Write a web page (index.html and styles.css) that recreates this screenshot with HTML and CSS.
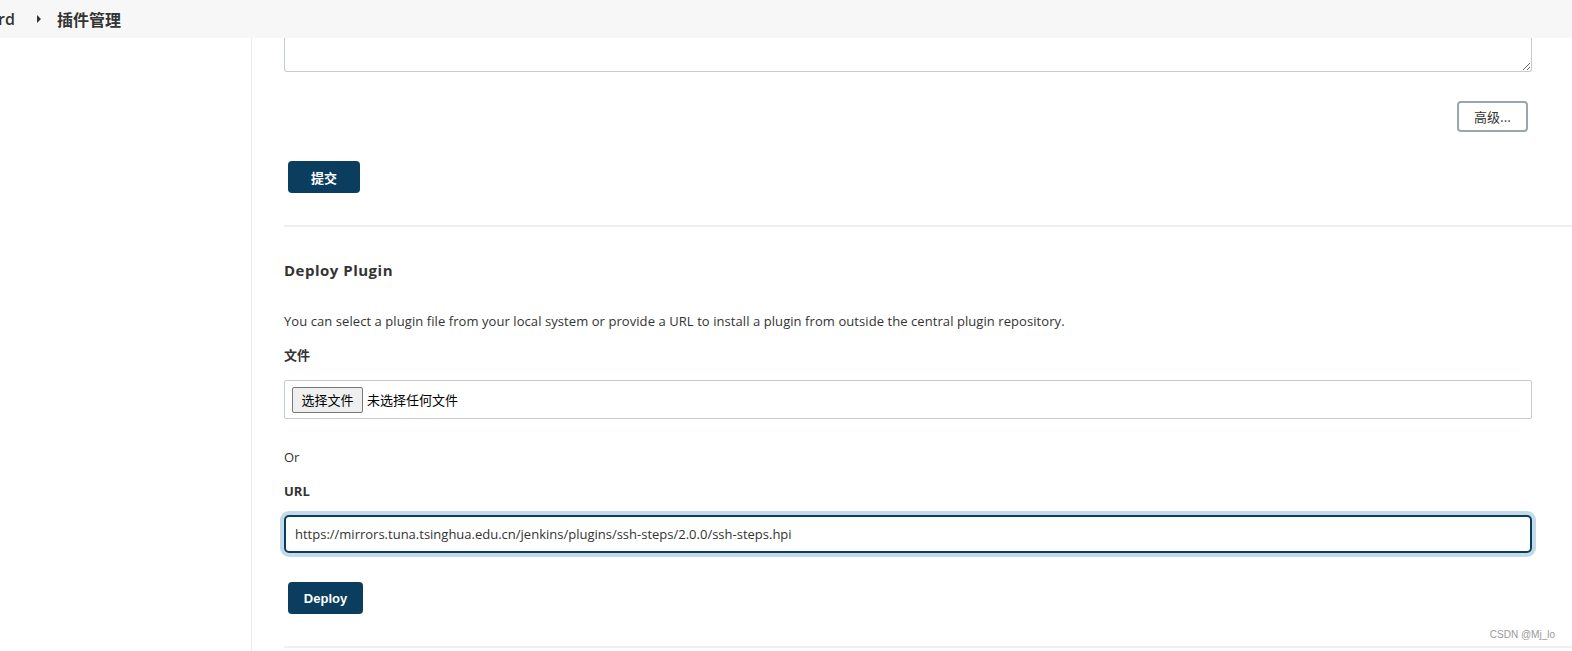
FILE: index.html
```html
<!DOCTYPE html>
<html lang="zh-CN">
<head>
  <meta charset="UTF-8" />
  <title>插件管理 [Jenkins]</title>
  <link rel="stylesheet" href="styles.css">
</head>
<body>

<!-- Breadcrumb bar -->
<header class="top-bar">
  <span class="crumb">rd</span>
  <span class="crumb-arrow"></span>
  <span class="crumb current">插件管理</span>
</header>

<div class="page">
  <aside class="side-panel"></aside>

  <main class="main-panel">
    <!-- tail of the previous form -->
    <div class="form-block">
      <textarea class="desc-box"></textarea>
      <div class="advanced-row">
        <button class="btn-advanced">高级...</button>
      </div>
      <div class="form-actions">
        <button class="btn-primary btn-submit">提交</button>
      </div>
    </div>

    <div class="separator"></div>

    <!-- Deploy Plugin -->
    <section class="form-block">
      <h3 class="section-title">Deploy Plugin</h3>
      <p class="section-desc">You can select a plugin file from your local system or provide a URL to install a plugin from outside the central plugin repository.</p>

      <div class="field-label">文件</div>
      <div class="file-box">
        <button class="file-btn">选择文件</button>
        <span class="file-name">未选择任何文件</span>
      </div>

      <div class="or-text">Or</div>

      <div class="field-label">URL</div>
      <input class="url-input" type="text" value="https://mirrors.tuna.tsinghua.edu.cn/jenkins/plugins/ssh-steps/2.0.0/ssh-steps.hpi" />

      <div class="form-actions">
        <button class="btn-primary btn-deploy">Deploy</button>
      </div>
    </section>

    <div class="separator"></div>
  </main>
</div>

<div class="watermark">CSDN @Mj_lo</div>

</body>
</html>
```

FILE: styles.css
```css
* {
  box-sizing: border-box;
}
body {
  margin: 0;
  font-family: "Open Sans", "Noto Sans CJK SC", sans-serif;
  font-size: 13px;
  color: #333;
  background: #fff;
  height: 651px;
  overflow: hidden;
  position: relative;
}

/* breadcrumb */
.top-bar {
  height: 38px;
  background: #f7f7f7;
  display: flex;
  align-items: center;
  font-size: 16px;
  font-weight: bold;
  color: #333;
}
.crumb {
  line-height: 20px;
}
.crumb:first-child {
  font-weight: 600;
  margin-left: -2px;
}
.crumb.current {
  font-family: "Noto Sans CJK SC", sans-serif;
  font-size: 16px;
}
.crumb-arrow {
  width: 0;
  height: 0;
  border-top: 4px solid transparent;
  border-bottom: 4px solid transparent;
  border-left: 4px solid #333;
  margin: 0 16px 0 22px;
}

.page {
  display: flex;
  height: 613px;
}
.side-panel {
  width: 252px;
  flex-shrink: 0;
  border-right: 1px solid #ececec;
}
.main-panel {
  flex: 1;
  padding-left: 32px;
}
.form-block {
  padding-right: 40px;
}

.desc-box {
  display: block;
  width: 100%;
  height: 34px;
  border: 1px solid #c3ccd1;
  border-top: none;
  border-radius: 0 0 3px 3px;
  resize: vertical;
  font-family: inherit;
}

.advanced-row {
  display: flex;
  justify-content: flex-end;
  margin-top: 29px;
  padding-right: 4px;
}
.btn-advanced {
  width: 71px;
  height: 31px;
  background: #fff;
  border: 2px solid #9aa5ad;
  border-radius: 4px;
  font-family: "Noto Sans CJK SC", sans-serif;
  font-size: 13px;
  color: #333;
  padding: 0;
}

.form-actions {
  padding-left: 4px;
}
.btn-primary {
  height: 32px;
  background: #0b3d5f;
  color: #fff;
  border: none;
  border-radius: 4px;
  font-weight: bold;
  font-size: 13px;
  padding: 0;
  cursor: pointer;
}
.btn-submit {
  width: 72px;
  margin-top: 29px;
  font-family: "Noto Sans CJK SC", sans-serif;
}
.btn-deploy {
  width: 75px;
  margin-top: 29px;
  font-family: "Liberation Sans", sans-serif;
}

.separator {
  height: 2px;
  background: #f0f0f0;
  margin-top: 32px;
}

.section-title {
  margin: 33px 0 0;
  font-size: 15px;
  line-height: 20px;
  font-weight: bold;
  letter-spacing: 0.5px;
}
.section-desc {
  margin: 31px 0 0;
  line-height: 20px;
  font-size: 13px;
  letter-spacing: 0.07px;
}
.field-label {
  margin-top: 14px;
  line-height: 20px;
  font-weight: bold;
}
.file-box {
  margin-top: 15px;
  height: 39px;
  border: 1px solid #c3ccd1;
  border-radius: 2px;
  display: flex;
  align-items: center;
  padding-left: 7px;
}
.file-btn {
  height: 26px;
  width: 71px;
  background: #efefef;
  border: 1px solid #767676;
  border-radius: 2px;
  font-family: "Noto Sans CJK SC", sans-serif;
  font-size: 13px;
  color: #000;
  padding: 0;
}
.file-name {
  margin-left: 4px;
  font-family: "Noto Sans CJK SC", sans-serif;
  font-size: 13px;
  color: #000;
}
.or-text {
  margin-top: 28px;
  line-height: 20px;
}
.field-label + .url-input {
  margin-top: 14px;
}
.url-input {
  display: block;
  width: 100%;
  height: 38px;
  border: 2px solid #0b3d5f;
  border-radius: 5px;
  box-shadow: 0 0 0 4px #c3dbe8;
  padding: 0 9px;
  font-family: inherit;
  font-size: 13px;
  color: #333;
  outline: none;
}

.watermark {
  position: absolute;
  right: 17px;
  bottom: 11px;
  font-family: "Liberation Sans", sans-serif;
  font-size: 10px;
  color: #999;
}
```
